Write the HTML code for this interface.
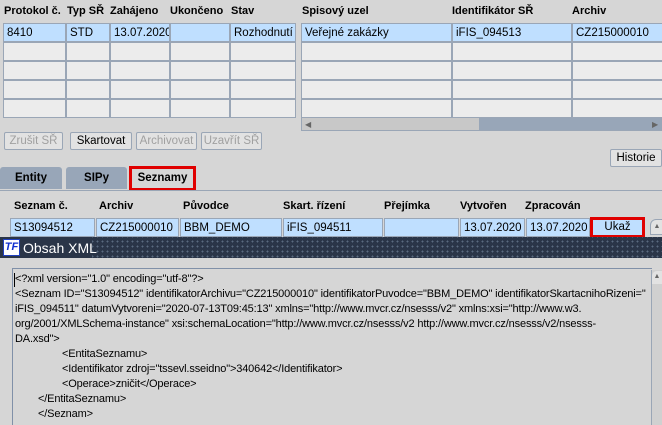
<!DOCTYPE html>
<html><head><meta charset="utf-8"><style>
*{margin:0;padding:0;box-sizing:border-box}
html,body{width:662px;height:425px;overflow:hidden}
body{background:#d6d6d6;font-family:"Liberation Sans",Arial,sans-serif;font-size:11.5px;color:#000;position:relative}
.a{position:absolute;white-space:nowrap}
.h{font-weight:bold;font-size:11px}
.c{position:absolute;border:1px solid #9aa6b6;background:#ececec;height:19px;padding:2px 3px;font-size:11.5px;line-height:14px;white-space:nowrap;overflow:hidden}
.s{background:#bfdfff}
.b{position:absolute;height:18px;border:1px solid #9aa6b6;background:#e2e2e2;font-size:11.5px;line-height:16px;text-align:center;border-radius:2px}
.d{color:#a0a0a0}
.x{position:absolute;left:15px;font-size:11px;white-space:nowrap;letter-spacing:-0.15px}
</style></head><body>
<div class="a h" style="left:4px;top:5px">Protokol č.</div>
<div class="a h" style="left:67px;top:5px">Typ SŘ</div>
<div class="a h" style="left:110px;top:5px">Zahájeno</div>
<div class="a h" style="left:170px;top:5px">Ukončeno</div>
<div class="a h" style="left:231px;top:5px">Stav</div>
<div class="a h" style="left:302px;top:5px">Spisový uzel</div>
<div class="a h" style="left:452px;top:5px">Identifikátor SŘ</div>
<div class="a h" style="left:572px;top:5px">Archiv</div>

<div class="c s" style="left:3px;top:23px;width:63px">8410</div>
<div class="c s" style="left:66px;top:23px;width:44px">STD</div>
<div class="c s" style="left:110px;top:23px;width:60px">13.07.2020</div>
<div class="c s" style="left:170px;top:23px;width:60px"></div>
<div class="c s" style="left:230px;top:23px;width:66px">Rozhodnutí</div>
<div class="c s" style="left:301px;top:23px;width:151px">Veřejné zakázky</div>
<div class="c s" style="left:452px;top:23px;width:120px">iFIS_094513</div>
<div class="c s" style="left:572px;top:23px;width:92px">CZ215000010</div>

<div id="rows"></div>

<div class="a" style="left:301px;top:117px;width:361px;height:14px;background:#c8c8c8;border:1px solid #9aa6b6"></div>
<div class="a" style="left:479px;top:118px;width:183px;height:12px;background:#98a6b8"></div>
<div class="a" style="left:305px;top:120px;font-size:8px;color:#666">◀</div>
<div class="a" style="left:652px;top:120px;font-size:8px;color:#666">▶</div>

<div class="b d" style="left:4px;top:132px;width:59px">Zrušit SŘ</div>
<div class="b" style="left:70px;top:132px;width:62px">Skartovat</div>
<div class="b d" style="left:136px;top:132px;width:61px">Archivovat</div>
<div class="b d" style="left:201px;top:132px;width:61px">Uzavřít SŘ</div>
<div class="b" style="left:610px;top:149px;width:52px">Historie</div>

<div class="a" style="left:0;top:167px;width:62px;height:22px;background:#98a6b8;border-radius:3px 3px 0 0;text-align:center;line-height:22px;font-weight:bold">Entity</div>
<div class="a" style="left:66px;top:167px;width:61px;height:22px;background:#98a6b8;border-radius:3px 3px 0 0;text-align:center;line-height:22px;font-weight:bold">SIPy</div>
<div class="a" style="left:129px;top:166px;width:67px;height:25px;border:3px solid #e00000;text-align:center;line-height:19px;font-weight:bold">Seznamy</div>
<div class="a" style="left:0;top:190px;width:662px;height:1px;background:#9aa6b6"></div>

<div class="a h" style="left:14px;top:200px">Seznam č.</div>
<div class="a h" style="left:99px;top:200px">Archiv</div>
<div class="a h" style="left:183px;top:200px">Původce</div>
<div class="a h" style="left:283px;top:200px">Skart. řízení</div>
<div class="a h" style="left:384px;top:200px">Přejímka</div>
<div class="a h" style="left:460px;top:200px">Vytvořen</div>
<div class="a h" style="left:525px;top:200px">Zpracován</div>

<div class="c s" style="left:10px;top:218px;width:85px">S13094512</div>
<div class="c s" style="left:96px;top:218px;width:83px">CZ215000010</div>
<div class="c s" style="left:180px;top:218px;width:102px">BBM_DEMO</div>
<div class="c s" style="left:283px;top:218px;width:100px">iFIS_094511</div>
<div class="c s" style="left:384px;top:218px;width:75px"></div>
<div class="c s" style="left:460px;top:218px;width:65px">13.07.2020</div>
<div class="c s" style="left:526px;top:218px;width:64px">13.07.2020</div>
<div class="a" style="left:590px;top:217px;width:55px;height:21px;border:3px solid #e00000;background:#bfdfff;text-align:center;line-height:15px">Ukaž</div>
<div class="a" style="left:650px;top:219px;width:14px;height:16px;border:1px solid #9aa6b6;border-radius:6px 0 0 0;background:#e2e2e2;font-size:7px;color:#666;text-align:center;line-height:14px">▲</div>

<div class="a" style="left:0;top:237px;width:662px;height:21px;background:#2a3548;background-image:radial-gradient(#5a6a80 0.8px,transparent 1px);background-size:5px 5px;background-position:95px 2px"></div>
<div class="a" style="left:0;top:237px;width:92px;height:21px;background:#2a3548"></div>
<div class="a" style="left:3px;top:239px;width:17px;height:17px;background:#fff;border:1px solid #2040c0;color:#1030d0;font-weight:bold;font-style:italic;font-size:11px;line-height:15px;text-align:center">TF</div>
<div class="a" style="left:23px;top:240px;color:#fff;font-size:14px">Obsah XML</div>

<div class="a" style="left:12px;top:268px;width:640px;height:160px;border-top:1px solid #8090a8;border-left:1px solid #8090a8;background:#d6d6d6"></div>
<div class="a" style="left:651px;top:270px;width:11px;height:160px;border-left:1px solid #9aa6b6;background:#d0d0d0"></div>
<div class="a" style="left:652px;top:271px;width:10px;height:13px;background:#e2e2e2;border-radius:5px 0 0 0;font-size:7px;color:#666;text-align:center;line-height:12px">▲</div>
<div class="a" style="left:14px;top:273px;width:1px;height:14px;background:#000"></div>

<div class="x" style="top:273px">&lt;?xml version="1.0" encoding="utf-8"?&gt;</div>
<div class="x" style="top:288px">&lt;Seznam ID="S13094512" identifikatorArchivu="CZ215000010" identifikatorPuvodce="BBM_DEMO" identifikatorSkartacnihoRizeni="</div>
<div class="x" style="top:303px">iFIS_094511" datumVytvoreni="2020-07-13T09:45:13" xmlns="http://www.mvcr.cz/nsesss/v2" xmlns:xsi="http://www.w3.</div>
<div class="x" style="top:318px">org/2001/XMLSchema-instance" xsi:schemaLocation="http://www.mvcr.cz/nsesss/v2 http://www.mvcr.cz/nsesss/v2/nsesss-</div>
<div class="x" style="top:333px">DA.xsd"&gt;</div>
<div class="x" style="left:62px;top:348px">&lt;EntitaSeznamu&gt;</div>
<div class="x" style="left:62px;top:363px">&lt;Identifikator zdroj="tssevl.sseidno"&gt;340642&lt;/Identifikator&gt;</div>
<div class="x" style="left:62px;top:378px">&lt;Operace&gt;zničit&lt;/Operace&gt;</div>
<div class="x" style="left:38px;top:393px">&lt;/EntitaSeznamu&gt;</div>
<div class="x" style="left:38px;top:408px">&lt;/Seznam&gt;</div>
<script>
var L=[[3,63],[66,44],[110,60],[170,60],[230,66],[301,151],[452,120],[572,92]],h='';
for(var r=1;r<5;r++)for(var i=0;i<L.length;i++)h+='<div class="c" style="left:'+L[i][0]+'px;top:'+(23+r*19)+'px;width:'+L[i][1]+'px"></div>';
document.getElementById('rows').innerHTML=h;
</script>
</body></html>
